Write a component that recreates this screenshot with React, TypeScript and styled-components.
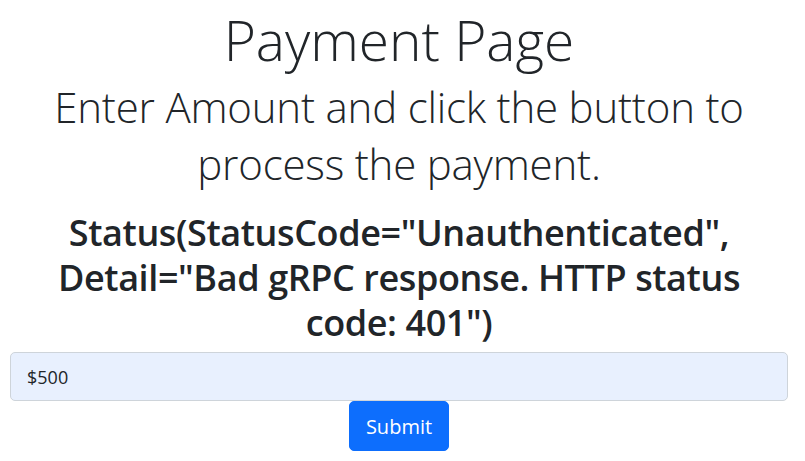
import React from "react";
import styled, { createGlobalStyle } from "styled-components";

const GlobalStyle = createGlobalStyle`
  html, body {
    margin: 0;
    padding: 0;
    background: #fff;
  }
  body {
    font-family: "Open Sans", "Noto Sans", sans-serif;
    color: #212529;
  }
`;

const Page = styled.div`
  padding: 0 17px 0 10px;
  text-align: center;
`;

const Title = styled.h1`
  margin: 0;
  padding-top: 4px;
  font-size: 55px;
  font-weight: 300;
  line-height: 72px;
`;

const Lead = styled.p`
  margin: 2px 0 0;
  font-size: 42px;
  font-weight: 300;
  line-height: 57px;
  letter-spacing: -0.2px;
`;

const Status = styled.h3`
  margin: 18px 0 0;
  font-size: 36px;
  font-weight: 600;
  line-height: 45px;
  letter-spacing: -0.4px;
`;

const Form = styled.form`
  margin-top: 7px;
  display: flex;
  flex-direction: column;
  align-items: center;
`;

const AmountInput = styled.input`
  box-sizing: border-box;
  width: 778px;
  height: 49px;
  padding: 0 16px;
  border: 1px solid #ced4da;
  border-radius: 5px;
  background: #e8f0fe;
  color: #212529;
  font-family: inherit;
  font-size: 18px;
  outline: none;
`;

const SubmitButton = styled.button`
  height: 50px;
  padding: 0 16px;
  border: 1px solid #0d6efd;
  border-radius: 5px;
  background: #0d6efd;
  color: #fff;
  font-family: inherit;
  font-size: 20px;
  cursor: pointer;
`;

export default function App() {
  return (
    <>
      <GlobalStyle />
      <Page>
        <Title>Payment Page</Title>
        <Lead>
          Enter Amount and click the button to
          <br />
          process the payment.
        </Lead>
        <Status>
          Status(StatusCode="Unauthenticated",
          <br />
          Detail="Bad gRPC response. HTTP status
          <br />
          code: 401")
        </Status>
        <Form onSubmit={e => e.preventDefault()}>
          <AmountInput defaultValue="$500" />
          <SubmitButton type="submit">Submit</SubmitButton>
        </Form>
      </Page>
    </>
  );
}
